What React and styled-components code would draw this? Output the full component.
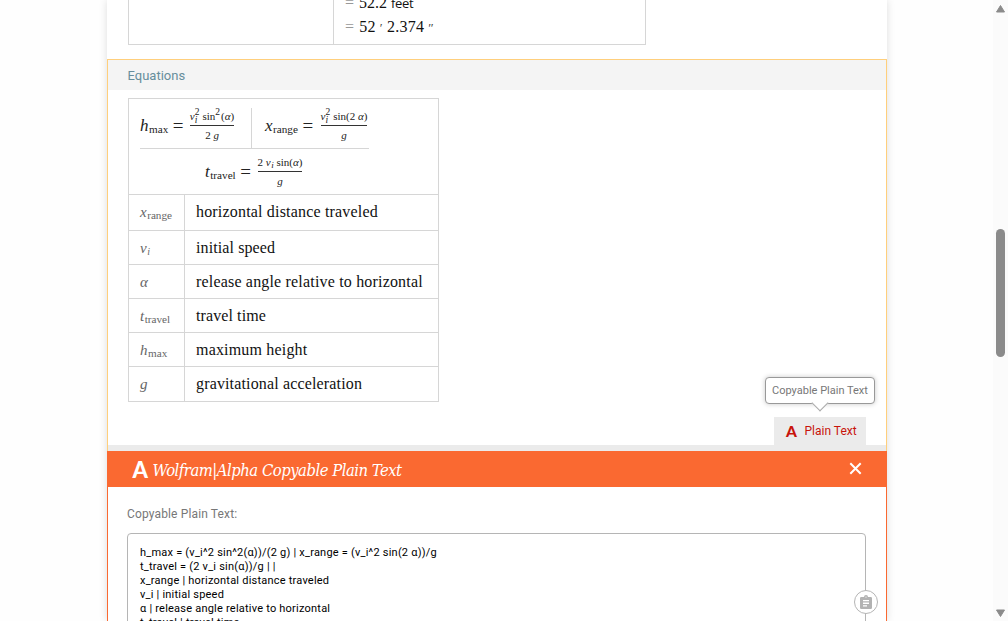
import React from "react";
import styled, { createGlobalStyle } from "styled-components";

const Global = createGlobalStyle`
  * { box-sizing: border-box; }
  body { margin: 0; background: #fefefe; overflow: hidden; font-family: Roboto, "Liberation Sans", sans-serif; }
`;
const SERIF = `"Liberation Serif", serif`;

const Viewport = styled.div`
  display: flex;
  height: 621px;
  overflow: hidden;
`;
const Main = styled.main`
  flex: 1;
  padding-left: 107px;
`;
const Column = styled.div`
  width: 780px;
  height: 621px;
  background: #fff;
  box-shadow: 0 0 8px rgba(0, 0, 0, 0.13);
`;
const PreviousPod = styled.section`
  height: 59px;
  padding-left: 21px;
`;
const PreviousTable = styled.div`
  display: grid;
  grid-template-columns: 204px 1fr;
  grid-template-rows: 44px;
  width: 518px;
  height: 45px;
  overflow: hidden;
  border: 1px solid #d6d6d6;
  border-top: 0;
`;
const Conversions = styled.div`
  display: flex;
  flex-direction: column;
  justify-content: flex-end;
  border-left: 1px solid #d6d6d6;
  padding: 0 0 5px 11px;
`;
const Conversion = styled.div`
  flex: none;
  height: 24px;
  font: 16px/24px ${SERIF};
  letter-spacing: ${(p) => p.$track || 0}px;
  color: #111;
  white-space: pre;
`;
const Equals = styled.span`
  color: #999;
  margin-right: 5px;
`;
const Unit = styled.span`
  font: 13px/20px "Open Sans", sans-serif;
  letter-spacing: -0.3px;
`;
const Prime = styled.span`
  font-size: 13px;
  color: #444;
`;

const Pod = styled.section`
  height: 392px;
  border: 1px solid #ffcf7c;
  border-bottom: 0;
  display: flex;
  flex-direction: column;
`;
const PodTitle = styled.h2`
  margin: 0;
  height: 30px;
  padding-left: 19.5px;
  background: #f4f4f4;
  color: #678e9c;
  font: 400 13px/31px Roboto, sans-serif;
`;
const EquationTable = styled.div`
  width: 311px;
  margin: 8px 0 0 20px;
  border: 1px solid #d6d6d6;
`;
const Formulas = styled.div`
  height: 95px;
  padding: 9px 0 0 11px;
  font-family: ${SERIF};
  color: #222;
`;
const FormulaPair = styled.div`
  display: flex;
  width: 229px;
  height: 41px;
  border-bottom: 1px solid #d6d6d6;
`;
const FormulaCell = styled.div`
  display: flex;
  width: ${(p) => p.$width}px;
  padding-top: ${(p) => p.$drop || 0}px;
  padding-left: ${(p) => p.$indent || 0}px;
  border-right: ${(p) => (p.$divided ? "1px solid #d6d6d6" : "0")};
`;
const Lhs = styled.div`
  width: ${(p) => p.$width}px;
  font: 17px/36px ${SERIF};
  white-space: nowrap;
`;
const Sub = styled.sub`
  font-size: ${(p) => p.$size || 11.2}px;
  line-height: 0;
  vertical-align: -2px;
  margin-left: 0.5px;
`;
const EqSign = styled.span`
  margin-left: 4.5px;
  font-size: 19px;
  line-height: 0;
  vertical-align: -1px;
`;
const Fraction = styled.div`
  width: ${(p) => p.$width}px;
  text-align: center;
  font: 11px/17px ${SERIF};
  white-space: nowrap;
`;
const Numerator = styled.div`
  height: 18px;
  display: flex;
  justify-content: center;
  border-bottom: 1px solid #333;
`;
const Denominator = styled.div`
  padding-top: 1px;
`;
const Scripts = styled.span`
  display: inline-flex;
  flex-direction: column;
  width: 5px;
  margin-right: ${(p) => p.$gap || 3}px;
  font-size: 9.5px;
  line-height: 8px;
  text-align: left;
`;
const Symbols = styled.div`
  display: grid;
  grid-template-columns: 55px 1fr;
  height: ${(p) => p.$height}px;
  border-top: 1px solid #d6d6d6;
`;
const SymbolCell = styled.div`
  padding-left: 11px;
  font: 15px/34px ${SERIF};
  color: #666;
`;
const Meaning = styled.div`
  border-left: 1px solid #d6d6d6;
  padding-left: 11px;
  font: 16px/34px ${SERIF};
  letter-spacing: ${(p) => p.$track}px;
  color: #111;
`;
const PodFooter = styled.div`
  position: relative;
  margin-top: auto;
  display: flex;
  justify-content: flex-end;
  padding-right: 20px;
  border-bottom: 6px solid #ebebeb;
`;
const PlainTextTab = styled.button`
  display: flex;
  align-items: center;
  width: 92px;
  height: 28px;
  padding: 0 0 0 12px;
  border: 0;
  background: #ebebeb;
  color: #c8140b;
  font: 12px/28px Roboto, sans-serif;
  text-align: left;
  white-space: nowrap;
`;
const TabLetter = styled.b`
  flex: none;
  width: 18.5px;
  font: 900 15.5px/28px Lato, sans-serif;
`;
const Tooltip = styled.div`
  position: absolute;
  right: 11px;
  bottom: 41px;
  width: 110px;
  height: 27px;
  border: 1px solid #999;
  border-radius: 4px;
  background: #fff;
  box-shadow: 0 0 5px rgba(0, 0, 0, 0.22);
  color: #777;
  font: 11px/26px Roboto, sans-serif;
  text-align: center;
  white-space: nowrap;
  &::after {
    content: "";
    position: absolute;
    left: 48px;
    bottom: -6px;
    width: 11px;
    height: 11px;
    transform: rotate(45deg);
    background: #fff;
    border: solid #aaa;
    border-width: 0 1px 1px 0;
  }
`;
const Banner = styled.header`
  display: flex;
  align-items: center;
  height: 36px;
  padding: 0 25px 0 25.5px;
  background: #fa6931;
  color: #fff;
`;
const BannerLetter = styled.b`
  width: 20px;
  font: 900 22px/36px Lato, sans-serif;
  padding-top: 2px;
`;
const BannerTitle = styled.span`
  flex: 1;
  padding-top: 3px;
  font: italic 16.5px/36px "DejaVu Serif Condensed", "DejaVu Serif", serif;
  font-stretch: condensed;
  letter-spacing: -0.5px;
`;
const CloseIcon = styled.svg`
  margin-bottom: 2px;
`;
const Panel = styled.section`
  height: 134px;
  padding: 18px 20px 0 19px;
  border: solid #fa6931;
  border-width: 0 1px;
`;
const PanelLabel = styled.div`
  height: 28px;
  color: #777;
  font: 12px/18px Roboto, sans-serif;
  letter-spacing: 0.14px;
`;
const CopyBox = styled.div`
  position: relative;
  height: 140px;
  padding: 12px;
  border: 1px solid #b5b5b5;
  border-radius: 4px;
  font: 11px/14px Roboto, sans-serif;
  letter-spacing: 0.22px;
  color: #000;
`;
const TextLine = styled.div`
  white-space: pre;
`;
const CopyButton = styled.button`
  position: absolute;
  right: -13px;
  top: 56px;
  width: 24px;
  height: 24px;
  padding: 0;
  display: grid;
  place-items: center;
  border: 1px solid #b5b5b5;
  border-radius: 50%;
  background: #fff;
`;
const ScrollTrack = styled.aside`
  display: flex;
  flex-direction: column;
  width: 15px;
  padding: 5px 3px 4px;
  background: #fbfbfb;
`;
const Thumb = styled.div`
  width: 9px;
  height: 128px;
  margin: 216px 0 auto;
  border-radius: 5px;
  background: #8b8b8b;
`;

const VSquared = () => (
  <>
    <i>v</i>
    <Scripts><span>2</span><i>i</i></Scripts>
  </>
);

const SYMBOLS = [
  { name: "x", sub: "range", text: "horizontal distance traveled", height: 36, track: 0.18 },
  { name: "v", sub: "i", text: "initial speed", height: 34, track: 0.1 },
  { name: "α", text: "release angle relative to horizontal", height: 34, track: 0.18 },
  { name: "t", sub: "travel", text: "travel time", height: 34, track: 0.1 },
  { name: "h", sub: "max", text: "maximum height", height: 34, track: 0.18 },
  { name: "g", text: "gravitational acceleration", height: 35, track: 0.15 },
];

const LINES = [
  "h_max = (v_i^2 sin^2(α))/(2 g) | x_range = (v_i^2 sin(2 α))/g",
  "t_travel = (2 v_i sin(α))/g | |",
  "x_range | horizontal distance traveled",
  "v_i | initial speed",
  "α | release angle relative to horizontal",
  "t_travel | travel time",
];

export default function App() {
  return (
    <Viewport>
      <Global />
      <Main>
        <Column>
          <PreviousPod>
            <PreviousTable>
              <div />
              <Conversions>
                <Conversion><Equals>=</Equals>52.2 <Unit>feet</Unit></Conversion>
                <Conversion $track={0.2}><Equals>=</Equals>52 <Prime>′</Prime> 2.374 <Prime>″</Prime></Conversion>
              </Conversions>
            </PreviousTable>
          </PreviousPod>

          <Pod>
            <PodTitle>Equations</PodTitle>
            <EquationTable>
              <Formulas>
                <FormulaPair>
                  <FormulaCell $width={112} $divided>
                    <Lhs $width={50}><i>h</i><Sub>max</Sub><EqSign>=</EqSign></Lhs>
                    <Fraction $width={44}>
                      <Numerator><VSquared />sin<Scripts $gap={1}>2</Scripts>(<i>α</i>)</Numerator>
                      <Denominator>2 <i>g</i></Denominator>
                    </Fraction>
                  </FormulaCell>
                  <FormulaCell $width={117} $indent={13}>
                    <Lhs $width={56}><i>x</i><Sub>range</Sub><EqSign>=</EqSign></Lhs>
                    <Fraction $width={46}>
                      <Numerator><VSquared />sin(2&nbsp;<i>α</i>)</Numerator>
                      <Denominator><i>g</i></Denominator>
                    </Fraction>
                  </FormulaCell>
                </FormulaPair>
                <FormulaCell $width={229} $indent={65} $drop={5}>
                  <Lhs $width={53}><i>t</i><Sub>travel</Sub><EqSign>=</EqSign></Lhs>
                  <Fraction $width={44}>
                    <Numerator>
                      <span>2 <i>v</i><Sub $size={9}><i>i</i></Sub> sin(<i>α</i>)</span>
                    </Numerator>
                    <Denominator><i>g</i></Denominator>
                  </Fraction>
                </FormulaCell>
              </Formulas>
              {SYMBOLS.map((s) => (
                <Symbols key={s.name} $height={s.height}>
                  <SymbolCell>
                    <i>{s.name}</i>
                    {s.sub && <Sub $size={s.sub === "i" ? 10 : 11.2}>{s.sub === "i" ? <i>i</i> : s.sub}</Sub>}
                  </SymbolCell>
                  <Meaning $track={s.track}>{s.text}</Meaning>
                </Symbols>
              ))}
            </EquationTable>
            <PodFooter>
              <Tooltip>Copyable Plain Text</Tooltip>
              <PlainTextTab><TabLetter>A</TabLetter>Plain Text</PlainTextTab>
            </PodFooter>
          </Pod>

          <Banner>
            <BannerLetter>A</BannerLetter>
            <BannerTitle>Wolfram|Alpha Copyable Plain Text</BannerTitle>
            <CloseIcon width="13" height="13" viewBox="0 0 13 13" aria-label="Close">
              <path d="M1.3 1.3l10.400 10.400M11.700 1.300l-10.400 10.400" stroke="#fff" strokeWidth="2" />
            </CloseIcon>
          </Banner>

          <Panel>
            <PanelLabel>Copyable Plain Text:</PanelLabel>
            <CopyBox>
              {LINES.map((line) => <TextLine key={line}>{line}</TextLine>)}
              <CopyButton aria-label="Copy">
                <svg width="12" height="14" viewBox="0 0 12 14">
                  <path fill="#b2b2b2" fillRule="evenodd" d="M1.2 2H4a2 2 0 0 1 4 0h2.8Q12 2 12 3.2v9.6q0 1.2-1.2 1.2H1.2Q0 14 0 12.800V3.200Q0 2 1.2 2zM3 5v1.300h6V5zm0 2.600v1.300h6V7.600zm0 2.600v1.300h4v-1.300zM6 1.500a.6.6 0 1 0 0 1.200.6.6 0 0 0 0-1.200z" />
                </svg>
              </CopyButton>
            </CopyBox>
          </Panel>
        </Column>
      </Main>
      <ScrollTrack>
        <svg width="9" height="8" viewBox="0 0 9 8"><path d="M4.500 0.500L8.500 7H.5z" fill="#8b8b8b" stroke="#8b8b8b" strokeLinejoin="round" /></svg>
        <Thumb />
        <svg width="9" height="8" viewBox="0 0 9 8"><path d="M.5 1h8L4.500 7.500z" fill="#8b8b8b" stroke="#8b8b8b" strokeLinejoin="round" /></svg>
      </ScrollTrack>
    </Viewport>
  );
}
